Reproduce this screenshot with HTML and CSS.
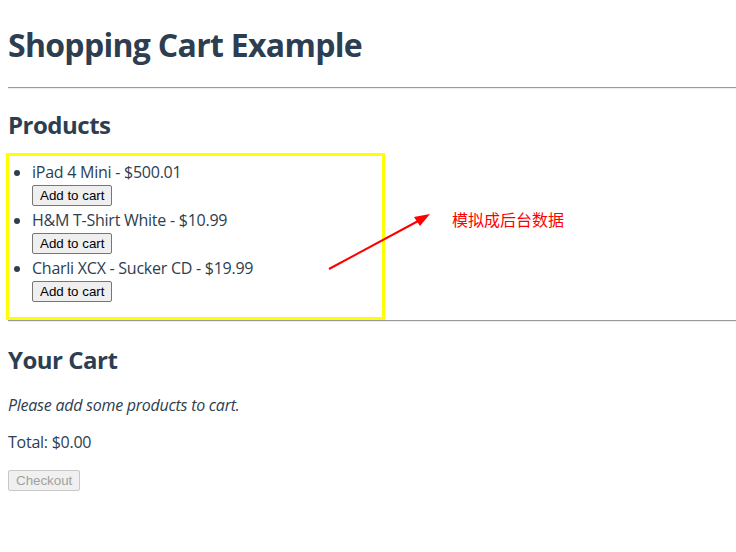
FILE: index.html
```html
<!DOCTYPE html>
<html>
<head>
<meta charset="utf-8">
<link rel="stylesheet" href="styles.css">
</head>
<body>
<div class="app">
  <h1 class="title">Shopping Cart Example</h1>
  <hr class="rule">
  <h2 class="section-title">Products</h2>
  <div class="products">
    <ul class="product-list">
      <li class="product">iPad 4 Mini - $500.01<br><button class="btn">Add to cart</button></li>
      <li class="product">H&amp;M T-Shirt White - $10.99<br><button class="btn">Add to cart</button></li>
      <li class="product">Charli XCX - Sucker CD - $19.99<br><button class="btn">Add to cart</button></li>
    </ul>
    <div class="highlight"></div>
    <svg class="arrow" width="110" height="62" viewBox="0 0 110 62">
      <line x1="1" y1="60" x2="92" y2="11" stroke="#f00" stroke-width="2"/>
      <polygon points="102,5 86,8 92,17" fill="#f00"/>
    </svg>
    <span class="note">模拟成后台数据</span>
  </div>
  <hr class="rule rule-tight">
  <h2 class="section-title cart-title">Your Cart</h2>
  <p class="empty">Please add some products to cart.</p>
  <p class="total">Total: $0.00</p>
  <p class="actions"><button class="btn" disabled>Checkout</button></p>
</div>
</body>
</html>
```
FILE: styles.css
```css
html, body { margin: 0; padding: 0; background: #fff; }
body { padding: 8px 0 0 8px; }
.app {
  font-family: "Open Sans", "Noto Sans", sans-serif;
  color: #2c3e50;
  font-size: 16px;
  letter-spacing: -0.25px;
}
.title {
  font-size: 32px;
  font-weight: 700;
  margin: 13px 0 0 0;
  line-height: 48px;
  letter-spacing: -0.7px;
}
.rule {
  border: 0;
  border-top: 1px solid #9a9a9a;
  border-bottom: 1px solid #eee;
  margin: 18px 0 0 0;
  height: 0;
}
.rule-tight { margin-top: 15px; }
.section-title {
  font-size: 24px;
  font-weight: 700;
  margin: 20px 0 0 0;
  line-height: 32px;
  letter-spacing: -0.5px;
}
.cart-title { margin-top: 22px; }
.products { position: relative; }
.product-list {
  margin: 20px 0 0 0;
  padding: 0 0 0 24px;
  line-height: 22px;
}
.product { margin: 0; }
.btn {
  font-family: Arial, "Liberation Sans", sans-serif;
  font-size: 13.33px;
  letter-spacing: 0;
  color: #000;
  background: #efefef;
  border: 1px solid #767676;
  border-radius: 2px;
  padding: 2px 7px;
  margin: 0 0 3px 0;
  line-height: 15px;
}
.btn:disabled {
  color: #a0a0a0;
  background: #f0f0f0;
  border-color: #c8c8c8;
}
.highlight {
  position: absolute;
  left: -2px;
  top: -8px;
  width: 373px;
  height: 161px;
  border: 3px solid #ffff00;
}
.arrow {
  position: absolute;
  left: 320px;
  top: 48px;
}
.note {
  position: absolute;
  left: 444px;
  top: 46px;
  color: #f00;
  font-size: 16px;
  letter-spacing: 0;
  line-height: 24px;
  font-family: "Noto Sans CJK SC", sans-serif;
}
.empty { font-style: italic; margin: 18px 0 0 0; line-height: 22px; }
.total { margin: 15px 0 0 0; line-height: 22px; }
.actions { margin: 15px 0 0 0; }
.actions .btn { margin: 0; }
```
